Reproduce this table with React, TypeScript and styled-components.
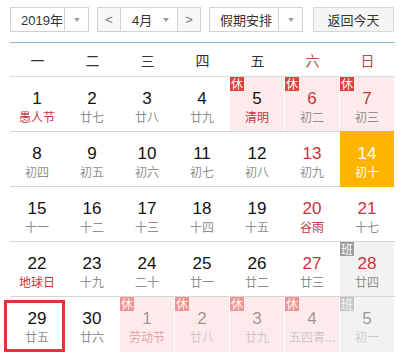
import styled, { createGlobalStyle, css } from "styled-components";

type Kind = "normal" | "rest" | "work" | "today";

interface Day {
  n: number;
  lunar: string;
  kind?: Kind;
  redNum?: boolean;
  redLunar?: boolean;
  faded?: boolean;
  marked?: boolean;
}

const weeks: Day[][] = [
  [
    { n: 1, lunar: "愚人节", redLunar: true },
    { n: 2, lunar: "廿七" },
    { n: 3, lunar: "廿八" },
    { n: 4, lunar: "廿九" },
    { n: 5, lunar: "清明", kind: "rest", redLunar: true },
    { n: 6, lunar: "初二", kind: "rest", redNum: true },
    { n: 7, lunar: "初三", kind: "rest", redNum: true },
  ],
  [
    { n: 8, lunar: "初四" },
    { n: 9, lunar: "初五" },
    { n: 10, lunar: "初六" },
    { n: 11, lunar: "初七" },
    { n: 12, lunar: "初八" },
    { n: 13, lunar: "初九", redNum: true },
    { n: 14, lunar: "初十", kind: "today" },
  ],
  [
    { n: 15, lunar: "十一" },
    { n: 16, lunar: "十二" },
    { n: 17, lunar: "十三" },
    { n: 18, lunar: "十四" },
    { n: 19, lunar: "十五" },
    { n: 20, lunar: "谷雨", redNum: true, redLunar: true },
    { n: 21, lunar: "十七", redNum: true },
  ],
  [
    { n: 22, lunar: "地球日", redLunar: true },
    { n: 23, lunar: "十九" },
    { n: 24, lunar: "二十" },
    { n: 25, lunar: "廿一" },
    { n: 26, lunar: "廿二" },
    { n: 27, lunar: "廿三", redNum: true },
    { n: 28, lunar: "廿四", kind: "work", redNum: true },
  ],
  [
    { n: 29, lunar: "廿五", marked: true },
    { n: 30, lunar: "廿六" },
    { n: 1, lunar: "劳动节", kind: "rest", redLunar: true, faded: true },
    { n: 2, lunar: "廿八", kind: "rest", faded: true },
    { n: 3, lunar: "廿九", kind: "rest", faded: true },
    { n: 4, lunar: "五四青...", kind: "rest", faded: true },
    { n: 5, lunar: "初一", kind: "work", faded: true },
  ],
];

const weekdays = ["一", "二", "三", "四", "五", "六", "日"];

const GlobalStyle = createGlobalStyle`
  body {
    margin: 0;
    background: #fff;
    font-family: "Liberation Sans", "Noto Sans CJK SC", sans-serif;
  }
`;

const Page = styled.div`
  width: 405px;
  padding: 7px 10px 0;
  box-sizing: border-box;
`;

const Toolbar = styled.div`
  display: flex;
  align-items: center;
  height: 25px;
  gap: 8px;
`;

const Box = styled.div<{ $w: number }>`
  display: flex;
  width: ${(p) => p.$w}px;
  height: 25px;
  box-sizing: border-box;
  border: 1px solid #d2d2d2;
  background: #fff;
  font-size: 13px;
  color: #333;
  white-space: nowrap;
`;

const Label = styled.div<{ $pad?: number }>`
  flex: 1;
  display: flex;
  align-items: center;
  padding-left: ${(p) => p.$pad ?? 10}px;
`;

const Caret = styled.div<{ $plain?: boolean }>`
  width: 23px;
  border-left: ${(p) => (p.$plain ? "none" : "1px solid #d2d2d2")};
  display: flex;
  align-items: center;
  justify-content: center;

  &::after {
    content: "";
    border-left: 3.5px solid transparent;
    border-right: 3.5px solid transparent;
    border-top: 4px solid #a0a0a0;
  }
`;

const Step = styled.div<{ $left?: boolean }>`
  width: 22px;
  background: #f7f7f7;
  display: flex;
  align-items: center;
  justify-content: center;
  ${(p) => (p.$left ? "border-right" : "border-left")}: 1px solid #d2d2d2;
  color: #777;
`;

const Button = styled.div`
  margin-left: 2px;
  width: 81px;
  height: 25px;
  box-sizing: border-box;
  border: 1px solid #d8d8d8;
  background: #f5f5f5;
  display: flex;
  align-items: center;
  justify-content: center;
  font-size: 13px;
  color: #333;
  white-space: nowrap;
`;

const Calendar = styled.div`
  margin-top: 10px;
  border-top: 1px solid #7fc1d5;
  width: 385px;
`;

const WeekHead = styled.div`
  display: grid;
  grid-template-columns: repeat(7, 55px);
  height: 33px;
  border-bottom: 1px solid #dcdcdc;
`;

const WeekName = styled.div<{ $red?: boolean }>`
  display: flex;
  align-items: center;
  justify-content: center;
  font-size: 14px;
  color: ${(p) => (p.$red ? "#c9434b" : "#333")};
`;

const Row = styled.div<{ $last?: boolean }>`
  display: grid;
  grid-template-columns: repeat(7, 55px);
  height: 55px;
  box-sizing: border-box;
  border-bottom: ${(p) => (p.$last ? "none" : "1px solid #d6d6d6")};
`;

const bgFor: Record<Kind, string> = {
  normal: "transparent",
  rest: "#fdebeb",
  work: "#f2f2f2",
  today: "#ffb400",
};

const Cell = styled.div<{ $kind: Kind }>`
  position: relative;
  margin: 0 1px 0 0;
  background: ${(p) => bgFor[p.$kind]};
  text-align: center;
  padding-top: 12px;
  box-sizing: border-box;
  ${(p) =>
    p.$kind === "today" &&
    css`
      margin-top: -1px;
      margin-bottom: -1px;
      padding-top: 13px;
    `}
`;

const Content = styled.div<{ $faded?: boolean }>`
  opacity: ${(p) => (p.$faded ? 0.4 : 1)};
`;

const Num = styled.div<{ $color: string }>`
  font-family: "Liberation Sans", Arial, sans-serif;
  font-size: 17px;
  line-height: 20px;
  color: ${(p) => p.$color};
`;

const Lunar = styled.div<{ $color: string }>`
  font-family: "Noto Sans CJK SC", sans-serif;
  font-size: 12px;
  line-height: 16px;
  color: ${(p) => p.$color};
  white-space: nowrap;
`;

const Tag = styled.div<{ $work?: boolean; $faded?: boolean }>`
  position: absolute;
  left: 0;
  top: 0;
  width: 14px;
  height: 14px;
  background: ${(p) => (p.$work ? "#9a9a9a" : "#e0413c")};
  opacity: ${(p) => (p.$faded ? 0.5 : 1)};
  color: #fff;
  font-family: "Noto Sans CJK SC", sans-serif;
  font-size: 12px;
  line-height: 14px;
  text-align: center;
`;

const Mark = styled.div`
  position: absolute;
  left: -6px;
  top: 3px;
  width: 61px;
  height: 52px;
  box-sizing: border-box;
  border: 3px solid #d8353d;
`;

function DayCell({ d }: { d: Day }) {
  const kind = d.kind ?? "normal";
  const today = kind === "today";
  const numColor = today ? "#fff" : d.redNum ? "#c8323a" : "#111";
  const lunarColor = today ? "#fff" : d.redLunar ? "#c8323a" : "#8f8f8f";
  return (
    <Cell $kind={kind}>
      {(kind === "rest" || kind === "work") && (
        <Tag $work={kind === "work"} $faded={d.faded}>
          {kind === "work" ? "班" : "休"}
        </Tag>
      )}
      <Content $faded={d.faded}>
        <Num $color={numColor}>{d.n}</Num>
        <Lunar $color={lunarColor}>{d.lunar}</Lunar>
      </Content>
      {d.marked && <Mark />}
    </Cell>
  );
}

export default function App() {
  return (
    <Page>
      <GlobalStyle />
      <Toolbar>
        <Box $w={79}>
          <Label>2019年</Label>
          <Caret />
        </Box>
        <Box $w={104}>
          <Step $left>&lt;</Step>
          <Label $pad={11}>4月</Label>
          <Caret $plain />
          <Step>&gt;</Step>
        </Box>
        <Box $w={94}>
          <Label>假期安排</Label>
          <Caret />
        </Box>
        <Button>返回今天</Button>
      </Toolbar>
      <Calendar>
        <WeekHead>
          {weekdays.map((w, i) => (
            <WeekName key={w} $red={i >= 5}>
              {w}
            </WeekName>
          ))}
        </WeekHead>
        {weeks.map((week, i) => (
          <Row key={i} $last={i === weeks.length - 1}>
            {week.map((d, j) => (
              <DayCell key={j} d={d} />
            ))}
          </Row>
        ))}
      </Calendar>
    </Page>
  );
}
